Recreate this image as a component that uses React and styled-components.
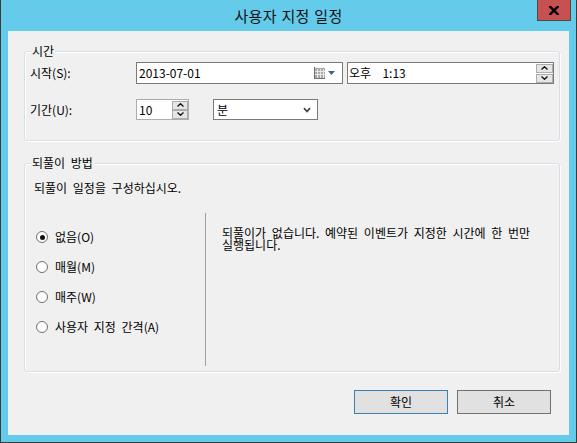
import React from "react";
import styled, { createGlobalStyle } from "styled-components";

const Global = createGlobalStyle`
  html, body { margin: 0; padding: 0; background: #ffffff; }
  body {
    font-family: "Noto Sans CJK KR", "Noto Sans", sans-serif;
    font-size: 12px;
    color: #000;
    word-spacing: 3px;
  }
  * { box-sizing: border-box; }
`;

const Window = styled.div`
  width: 577px;
  height: 443px;
  background: #65cbea;
  border: 1px solid #3b3b3b;
  border-top: none;
  display: flex;
  flex-direction: column;
`;

const TitleBar = styled.div`
  height: 31px;
  flex: none;
  display: grid;
  grid-template-columns: 1fr auto 1fr;
  align-items: start;
`;

const Title = styled.div`
  grid-column: 2;
  font-size: 15px;
  line-height: 31px;
  color: #111;
  letter-spacing: 0.3px;
  word-spacing: 1px;
`;

const CloseButton = styled.div`
  grid-column: 3;
  justify-self: end;
  margin-right: 5px;
  width: 34px;
  height: 21px;
  background: #c75050;
  border: 1px solid #4a4a4a;
  border-top: none;
  display: flex;
  align-items: center;
  justify-content: center;
`;

const Client = styled.div`
  flex: 1;
  margin: 0 7px 7px;
  background: #f0f0f0;
  padding: 20px 9px 0 16px;
  display: flex;
  flex-direction: column;
`;

const GroupBox = styled.div`
  position: relative;
  border: 1px solid #d5dfe5;
  border-radius: 3px;
  box-shadow: inset 1px 1px 0 #ffffff, 1px 1px 0 #ffffff;
  margin-top: ${(p) => p.$gap || 0}px;
  padding: ${(p) => p.$pad};
`;

const Legend = styled.span`
  position: absolute;
  top: -9px;
  left: 6px;
  padding: 0 1px;
  background: #f0f0f0;
  line-height: 16px;
`;

const FieldRow = styled.div`
  display: flex;
  align-items: center;
  height: ${(p) => p.$h}px;
  margin-top: ${(p) => p.$mt || 0}px;
`;

const Label = styled.div`
  width: 106px;
  flex: none;
  line-height: 14px;
`;

const Box = styled.div`
  width: ${(p) => p.$w}px;
  height: 100%;
  margin-left: ${(p) => p.$ml || 0}px;
  background: #fff;
  border: 1px solid ${(p) => (p.$light ? "#abadb3" : "#7a7a7a")};
  display: flex;
  align-items: center;
  padding-left: ${(p) => p.$pl || 2}px;
  flex: none;
`;

const BoxText = styled.span`
  flex: 1;
  line-height: 14px;
  white-space: pre;
`;

const SpinCol = styled.div`
  display: flex;
  flex-direction: column;
  gap: ${(p) => p.$gap}px;
  margin-right: ${(p) => p.$mr}px;
  align-self: center;
`;

const SpinBtn = styled.div`
  width: ${(p) => p.$w}px;
  height: 9px;
  background: #e6e6e6;
  border: 1px solid #acacac;
  display: flex;
  align-items: center;
  justify-content: center;
`;

const DateIcons = styled.div`
  display: flex;
  align-items: center;
  gap: 3px;
  margin-right: 7px;
`;

const Chevron = styled.div`
  margin-right: 6px;
  display: flex;
`;

const Desc = styled.div`
  padding-left: 9px;
  line-height: 14px;
`;

const Panels = styled.div`
  display: flex;
  height: 153px;
  margin-top: 18px;
`;

const Options = styled.div`
  width: 180px;
  flex: none;
  padding: 9px 0 0 11px;
  display: flex;
  flex-direction: column;
`;

const RadioRow = styled.label`
  height: 30px;
  display: flex;
  align-items: center;
  gap: 7px;
  line-height: 14px;
`;

const RadioCircle = styled.span`
  width: 12px;
  height: 12px;
  border-radius: 50%;
  border: 1px solid #707070;
  background: #fff;
  display: flex;
  align-items: center;
  justify-content: center;
  flex: none;
  &::after {
    content: "";
    width: 5px;
    height: 5px;
    border-radius: 50%;
    background: ${(p) => (p.$checked ? "#111" : "transparent")};
  }
`;

const Explain = styled.div`
  flex: 1;
  border-left: 1px solid #a0a0a0;
  padding: 14px 0 0 16px;
`;

const ExplainText = styled.p`
  margin: 0;
  width: 325px;
  line-height: 12px;
  word-break: keep-all;
`;

const Footer = styled.div`
  display: flex;
  justify-content: flex-end;
  gap: 9px;
  margin-top: 18px;
  padding-right: 9px;
`;

const Button = styled.div`
  width: 94px;
  height: 24px;
  background: #e1e1e1;
  border: 1px solid ${(p) => (p.$default ? "#3c7fb1" : "#707070")};
  display: flex;
  align-items: center;
  justify-content: center;
  line-height: 14px;
`;

const Up = () => (
  <svg width="7" height="4" viewBox="0 0 7 4">
    <polyline points="0.5,3.5 3.5,0.7 6.5,3.5" fill="none" stroke="#111" strokeWidth="1.3" />
  </svg>
);
const Down = () => (
  <svg width="7" height="4" viewBox="0 0 7 4">
    <polyline points="0.5,0.5 3.5,3.3 6.5,0.5" fill="none" stroke="#111" strokeWidth="1.3" />
  </svg>
);

const CloseX = () => (
  <svg width="10" height="9" viewBox="0 0 10 9">
    <path d="M1 0.5 L9 8.5 M9 0.5 L1 8.5" stroke="#000" strokeWidth="2.4" strokeLinecap="square" />
  </svg>
);

const CalendarIcon = () => (
  <svg width="11" height="12" viewBox="0 0 11 12" shapeRendering="crispEdges">
    <rect x="0" y="0" width="11" height="12" fill="#f2f2f2" />
    <rect x="1" y="1" width="10" height="10" fill="#a9a9a9" />
    <path d="M3.5 2 V11 M6.5 2 V11 M9.5 2 V11 M1 4.5 H11 M1 7.5 H11" stroke="#e8e8e8" strokeWidth="1" />
    <path d="M0.5 0 V11.5 H11" fill="none" stroke="#707070" strokeWidth="1" />
  </svg>
);

const Tri = () => (
  <svg width="7" height="4" viewBox="0 0 7 4">
    <polygon points="0,0 7,0 3.5,4" fill="#46618c" />
  </svg>
);

const DropChevron = () => (
  <svg width="8" height="6" viewBox="0 0 8 6">
    <polyline points="1,1.2 4,4.5 7,1.2" fill="none" stroke="#444" strokeWidth="1.8" />
  </svg>
);

const options = [
  { label: "없음(O)", checked: true },
  { label: "매월(M)" },
  { label: "매주(W)" },
  { label: "사용자 지정 간격(A)" },
];

export default function App() {
  return (
    <>
      <Global />
      <Window>
        <TitleBar>
          <Title>사용자 지정 일정</Title>
          <CloseButton>
            <CloseX />
          </CloseButton>
        </TitleBar>
        <Client>
          <GroupBox $pad="10px 0 20px 5px">
            <Legend>시간</Legend>
            <FieldRow $h={22}>
              <Label>시작(S):</Label>
              <Box $w={207}>
                <BoxText>2013-07-01</BoxText>
                <DateIcons>
                  <CalendarIcon />
                  <Tri />
                </DateIcons>
              </Box>
              <Box $w={207} $ml={4} $pl={1}>
                <BoxText>오후  1:13</BoxText>
                <SpinCol $gap={1} $mr={0}>
                  <SpinBtn $w={17}><Up /></SpinBtn>
                  <SpinBtn $w={17}><Down /></SpinBtn>
                </SpinCol>
              </Box>
            </FieldRow>
            <FieldRow $h={21} $mt={15}>
              <Label>기간(U):</Label>
              <Box $w={53} $light>
                <BoxText>10</BoxText>
                <SpinCol $gap={0} $mr={0}>
                  <SpinBtn $w={16}><Up /></SpinBtn>
                  <SpinBtn $w={16}><Down /></SpinBtn>
                </SpinCol>
              </Box>
              <Box $w={105} $ml={24} $pl={3}>
                <BoxText>분</BoxText>
                <Chevron>
                  <DropChevron />
                </Chevron>
              </Box>
            </FieldRow>
          </GroupBox>

          <GroupBox $gap={22} $pad="17px 0 5px 0">
            <Legend>되풀이 방법</Legend>
            <Desc>되풀이 일정을 구성하십시오.</Desc>
            <Panels>
              <Options>
                {options.map((o) => (
                  <RadioRow key={o.label}>
                    <RadioCircle $checked={o.checked} />
                    <span>{o.label}</span>
                  </RadioRow>
                ))}
              </Options>
              <Explain>
                <ExplainText>
                  되풀이가 없습니다. 예약된 이벤트가 지정한 시간에 한 번만 실행됩니다.
                </ExplainText>
              </Explain>
            </Panels>
          </GroupBox>

          <Footer>
            <Button $default>확인</Button>
            <Button>취소</Button>
          </Footer>
        </Client>
      </Window>
    </>
  );
}
